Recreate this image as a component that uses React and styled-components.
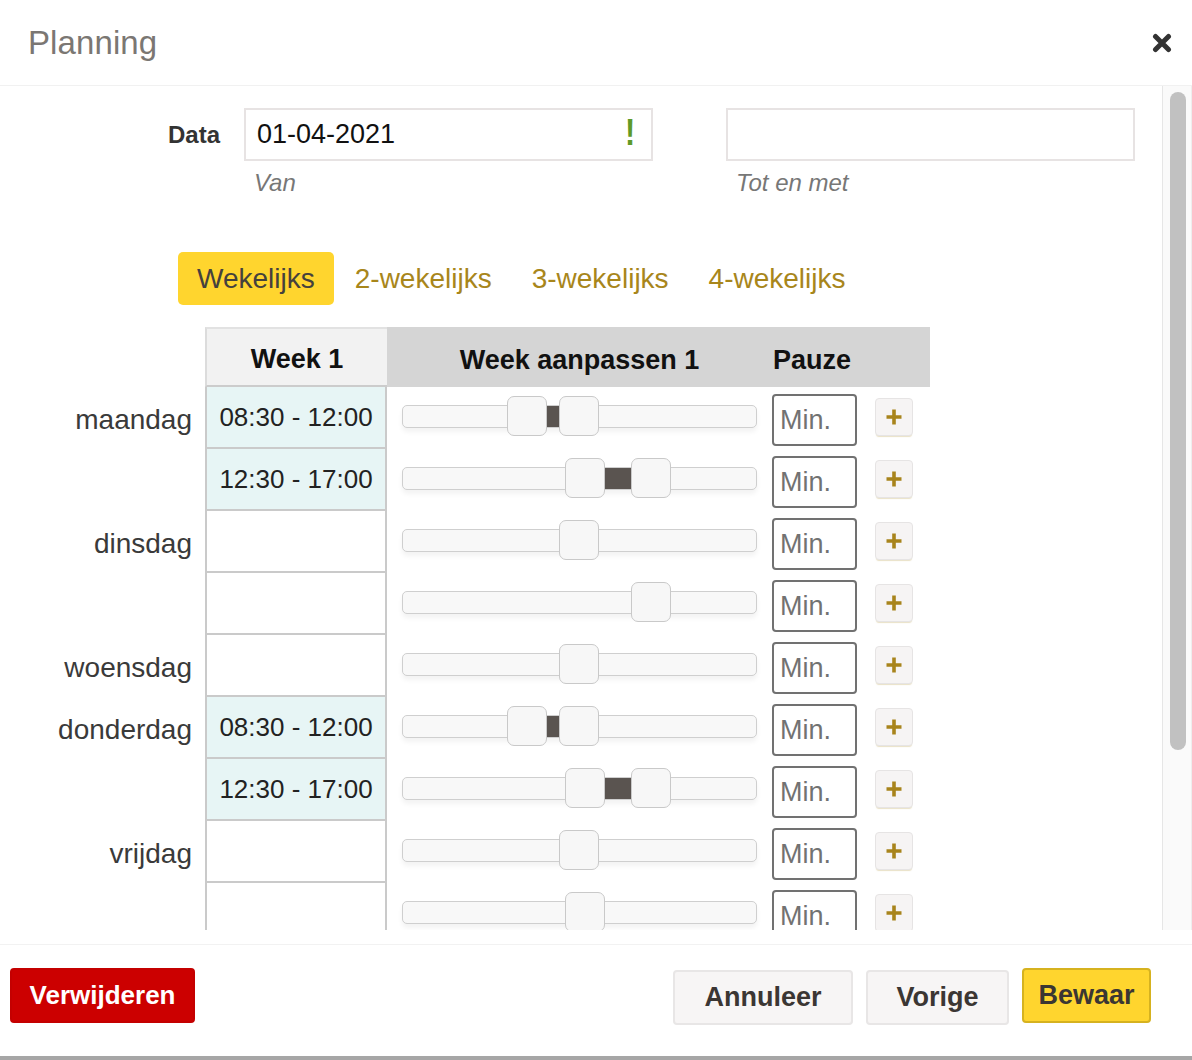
import React from "react";
import styled, { createGlobalStyle } from "styled-components";

const Global = createGlobalStyle`
  html, body { margin: 0; padding: 0; background: #fff; }
  body { font-family: "Liberation Sans", Arial, Helvetica, sans-serif; overflow: hidden; }
  * { box-sizing: border-box; }
`;

const Dialog = styled.div`
  width: 1192px;
  height: 1060px;
  display: flex;
  flex-direction: column;
  background: #fff;
  border-bottom: 4px solid #a6a6a6;
`;

const Header = styled.div`
  height: 86px;
  flex: none;
  display: flex;
  align-items: center;
  justify-content: space-between;
  padding: 0 20px 0 28px;
  border-bottom: 1px solid #f1f1f1;
`;

const Title = styled.h1`
  margin: 0;
  font-size: 33px;
  font-weight: normal;
  color: #7b7773;
  letter-spacing: 0.1px;
`;

const Close = styled.button`
  border: 0;
  background: none;
  padding: 0;
  width: 20px;
  height: 20px;
  display: flex;
  cursor: pointer;
`;

const Body = styled.div`
  height: 844px;
  flex: none;
  display: flex;
`;

const Scroller = styled.div`
  flex: 1;
  overflow: hidden;
`;

const Rail = styled.div`
  width: 30px;
  flex: none;
  background: #fafafa;
  border-left: 1px solid #e6e6e6;
  border-right: 1px solid #eeeeee;
  padding: 6px 5px 0 7px;
`;

const Thumb = styled.div`
  height: 658px;
  border-radius: 8px;
  background: #c1c1c1;
`;

const Content = styled.div`
  padding: 22px 0 40px;
`;

const DataRow = styled.div`
  display: flex;
  align-items: flex-start;
`;

const DataLabel = styled.div`
  width: 220px;
  height: 53px;
  display: flex;
  align-items: center;
  justify-content: flex-end;
  font-size: 24px;
  font-weight: bold;
  color: #333;
  margin-right: 24px;
`;

const Field = styled.div`
  width: 409px;
  display: flex;
  flex-direction: column;
  & + & { margin-left: 73px; }
`;

const InputBox = styled.div`
  height: 53px;
  border: 2px solid #e7e3e3;
  display: flex;
  align-items: center;
  justify-content: space-between;
  padding: 0 15px 0 11px;
  font-size: 27px;
  color: #111;
`;

const Warn = styled.span`
  font-size: 36px;
  font-weight: bold;
  color: #5f9a28;
  line-height: 1;
  margin-top: -4px;
  transform: scaleX(0.85);
`;

const Helper = styled.div`
  margin-top: 9px;
  padding-left: 10px;
  font-size: 24px;
  font-style: italic;
  color: #777;
  line-height: 26px;
`;

const Tabs = styled.div`
  display: flex;
  gap: 2px;
  margin-top: 56px;
  padding-left: 178px;
`;

const Tab = styled.button`
  height: 53px;
  padding: 0 19px;
  border: 0;
  border-radius: 5px;
  font-family: inherit;
  font-size: 28px;
  background: ${(p) => (p.$active ? "#ffd52e" : "transparent")};
  color: ${(p) => (p.$active ? "#45413d" : "#a8861b")};
  cursor: pointer;
`;

const Table = styled.div`
  margin-top: 22px;
  display: flex;
  flex-direction: column;
`;

const Row = styled.div`
  display: flex;
  align-items: stretch;
  height: ${(p) => (p.$head ? 60 : 62)}px;
`;

const DayLabel = styled.div`
  width: 205px;
  padding-right: 13px;
  display: flex;
  align-items: center;
  justify-content: flex-end;
  font-size: 28px;
  color: #3a3a3a;
  padding-top: 4px;
`;

const HeadWeek = styled.div`
  width: 182px;
  background: #f2f2f2;
  border-left: 2px solid #dcdcdc;
  border-top: 2px solid #e2e2e2;
  border-bottom: 2px solid #cccccc;
  display: flex;
  align-items: center;
  justify-content: center;
  font-size: 27px;
  font-weight: bold;
  color: #111;
  padding-top: 4px;
`;

const HeadGroup = styled.div`
  width: 543px;
  background: #d5d5d5;
  display: flex;
  align-items: center;
  font-size: 27px;
  font-weight: bold;
  color: #111;
  padding-top: 6px;
`;

const HeadTitle = styled.div`
  width: ${(p) => p.$w}px;
  text-align: center;
`;

const WeekCell = styled.div`
  width: 182px;
  border-left: 2px solid #cacaca;
  border-right: 2px solid #cacaca;
  border-bottom: 2px solid #cacaca;
  background: ${(p) => (p.$filled ? "#e7f5f5" : "#fff")};
  display: flex;
  align-items: center;
  justify-content: center;
  font-size: 26px;
  color: #222;
`;

const SliderCell = styled.div`
  width: 385px;
  padding: 0 15px;
  display: flex;
  align-items: center;
  padding-bottom: 4px;
`;

const Track = styled.div`
  position: relative;
  width: 355px;
  height: 23px;
  border: 1.5px solid #cfcfcf;
  border-radius: 5px;
  background: #f8f8f8;
  box-shadow: 0 4px 5px rgba(0, 0, 0, 0.05);
`;

const Range = styled.div`
  position: absolute;
  top: 0;
  bottom: 0;
  background: #5a5450;
`;

const Handle = styled.div`
  position: absolute;
  top: 50%;
  width: 40px;
  height: 40px;
  margin-top: -20px;
  border: 1.5px solid #c9c9c9;
  border-radius: 7px;
  background: #f7f7f7;
`;

const PauzeCell = styled.div`
  width: 85px;
  display: flex;
  align-items: center;
  padding-top: 4px;
`;

const MinInput = styled.input`
  width: 85px;
  height: 52px;
  border: 2px solid #717171;
  border-radius: 4px;
  padding: 0 0 0 6px;
  font-family: inherit;
  font-size: 27px;
  color: #333;
  background: #fff;
  &::placeholder { color: #727272; }
`;

const PlusCell = styled.div`
  padding-left: 18px;
  display: flex;
  align-items: center;
  padding-bottom: 2px;
`;

const PlusBtn = styled.button`
  width: 38px;
  height: 38px;
  padding: 0;
  border: 1.5px solid #e6e4e4;
  border-radius: 4px;
  background: #f6f4f4;
  box-shadow: 0 2px 1px -1px rgba(168, 134, 27, 0.25);
  display: flex;
  align-items: center;
  justify-content: center;
`;

const Footer = styled.div`
  margin-top: 14px;
  border-top: 1px solid #f2f2f2;
  padding: 23px 41px 0 10px;
  display: flex;
  align-items: flex-start;
`;

const Btn = styled.button`
  height: 55px;
  width: ${(p) => p.$w}px;
  border-radius: 4px;
  font-family: inherit;
  font-size: ${(p) => (p.$danger ? 26 : 27)}px;
  font-weight: bold;
  cursor: pointer;
  border: 2px solid
    ${(p) => (p.$danger ? "#c40000" : p.$primary ? "#d6b21f" : "#e8e6e6")};
  background: ${(p) => (p.$danger ? "#cc0000" : p.$primary ? "#ffd52e" : "#f7f5f5")};
  color: ${(p) => (p.$danger ? "#fff" : "#3b3633")};
  margin-top: ${(p) => (p.$primary || p.$danger ? 0 : 2)}px;
`;

const Spacer = styled.div`
  flex: 1;
`;

const BtnGroup = styled.div`
  display: flex;
  gap: 13px;
  align-items: flex-start;
`;

const rows = [
  { day: "maandag", time: "08:30 - 12:00", h: [106, 158] },
  { day: "", time: "12:30 - 17:00", h: [164, 230] },
  { day: "dinsdag", time: "", h: [158] },
  { day: "", time: "", h: [230] },
  { day: "woensdag", time: "", h: [158] },
  { day: "donderdag", time: "08:30 - 12:00", h: [106, 158] },
  { day: "", time: "12:30 - 17:00", h: [164, 230] },
  { day: "vrijdag", time: "", h: [158] },
  { day: "", time: "", h: [164] },
];

function Slider({ handles }) {
  return (
    <Track>
      {handles.length === 2 && (
        <Range style={{ left: handles[0] + 38, width: handles[1] - handles[0] - 38 }} />
      )}
      {handles.map((x, i) => (
        <Handle key={i} style={{ left: x - 2 }} />
      ))}
    </Track>
  );
}

export default function App() {
  return (
    <>
      <Global />
      <Dialog>
        <Header>
          <Title>Planning</Title>
          <Close aria-label="Sluiten">
            <svg width="20" height="20" viewBox="0 0 20 20">
              <path d="M3.5 3.5 L16.5 16.5 M16.5 3.5 L3.5 16.5" stroke="#333" strokeWidth="5" strokeLinecap="round" />
            </svg>
          </Close>
        </Header>
        <Body>
          <Scroller>
            <Content>
              <DataRow>
                <DataLabel>Data</DataLabel>
                <Field>
                  <InputBox>
                    <span>01-04-2021</span>
                    <Warn>!</Warn>
                  </InputBox>
                  <Helper>Van</Helper>
                </Field>
                <Field>
                  <InputBox />
                  <Helper>Tot en met</Helper>
                </Field>
              </DataRow>

              <Tabs>
                <Tab $active>Wekelijks</Tab>
                <Tab>2-wekelijks</Tab>
                <Tab>3-wekelijks</Tab>
                <Tab>4-wekelijks</Tab>
              </Tabs>

              <Table>
                <Row $head>
                  <DayLabel />
                  <HeadWeek>Week 1</HeadWeek>
                  <HeadGroup>
                    <HeadTitle $w={385}>Week aanpassen 1</HeadTitle>
                    <HeadTitle $w={80}>Pauze</HeadTitle>
                  </HeadGroup>
                </Row>
                {rows.map((r, i) => (
                  <Row key={i}>
                    <DayLabel>{r.day}</DayLabel>
                    <WeekCell $filled={!!r.time}>{r.time}</WeekCell>
                    <SliderCell>
                      <Slider handles={r.h} />
                    </SliderCell>
                    <PauzeCell>
                      <MinInput placeholder="Min." />
                    </PauzeCell>
                    <PlusCell>
                      <PlusBtn aria-label="Toevoegen">
                        <svg width="18" height="18" viewBox="0 0 18 18">
                          <path d="M9 1.5 V16.5 M1.5 9 H16.5" stroke="#a8841c" strokeWidth="3.6" />
                        </svg>
                      </PlusBtn>
                    </PlusCell>
                  </Row>
                ))}
              </Table>
            </Content>
          </Scroller>
          <Rail>
            <Thumb />
          </Rail>
        </Body>
        <Footer>
          <Btn $danger $w={185}>Verwijderen</Btn>
          <Spacer />
          <BtnGroup>
            <Btn $w={180}>Annuleer</Btn>
            <Btn $w={143}>Vorige</Btn>
            <Btn $primary $w={129}>Bewaar</Btn>
          </BtnGroup>
        </Footer>
      </Dialog>
    </>
  );
}
